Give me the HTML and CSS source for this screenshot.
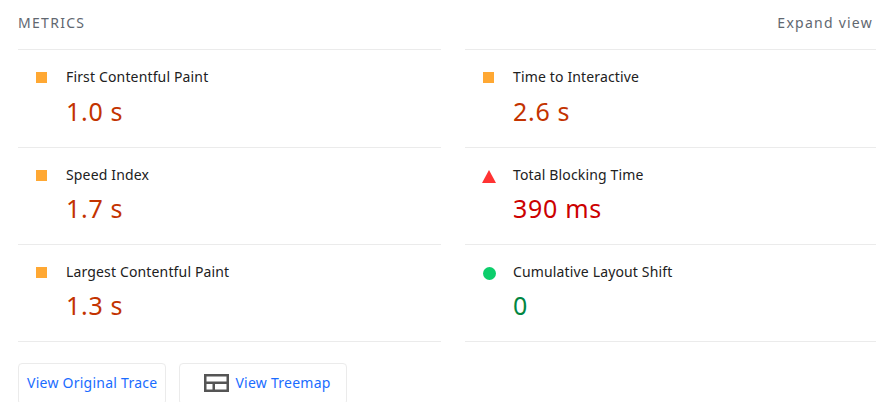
FILE: index.html
```html
<!DOCTYPE html>
<html lang="en">
<head>
    <meta charset="UTF-8">
    <title>Metrics</title>
    <link rel="stylesheet" href="styles.css">
</head>
<body>
    <div class="metrics">
        <div class="metrics-header">
            <span class="metrics-title">METRICS</span>
            <span class="expand-link">Expand view</span>
        </div>
        <div class="metrics-grid">
            <div class="metric">
                <span class="icon icon-square"></span>
                <div class="metric-text">
                    <div class="metric-name">First Contentful Paint</div>
                    <div class="metric-value average">1.0 s</div>
                </div>
            </div>
            <div class="metric">
                <span class="icon icon-square"></span>
                <div class="metric-text">
                    <div class="metric-name">Time to Interactive</div>
                    <div class="metric-value average">2.6 s</div>
                </div>
            </div>
            <div class="metric">
                <span class="icon icon-square"></span>
                <div class="metric-text">
                    <div class="metric-name">Speed Index</div>
                    <div class="metric-value average">1.7 s</div>
                </div>
            </div>
            <div class="metric">
                <span class="icon icon-triangle"></span>
                <div class="metric-text">
                    <div class="metric-name">Total Blocking Time</div>
                    <div class="metric-value fail">390 ms</div>
                </div>
            </div>
            <div class="metric">
                <span class="icon icon-square"></span>
                <div class="metric-text">
                    <div class="metric-name">Largest Contentful Paint</div>
                    <div class="metric-value average">1.3 s</div>
                </div>
            </div>
            <div class="metric">
                <span class="icon icon-circle"></span>
                <div class="metric-text">
                    <div class="metric-name">Cumulative Layout Shift</div>
                    <div class="metric-value pass">0</div>
                </div>
            </div>
        </div>
        <div class="buttons">
            <a class="button button-trace">View Original Trace</a>
            <a class="button button-treemap">
                <svg class="treemap-icon" width="25" height="18" viewBox="0 0 25 18">
                    <path fill="#555" fill-rule="evenodd" d="M0 0h25v18H0zM2.5 2.500v5h20v-5zM2.500 10v5.500h6V10zM11 10v5.500h11.500V10z"/>
                </svg>
                View Treemap
            </a>
        </div>
    </div>
</body>
</html>
```

FILE: styles.css
```css
html, body {
    height: 100%;
    overflow: hidden;
}

body {
    margin: 0;
    background: white;
    font-family: "Noto Sans", sans-serif;
    font-size: 14px;
}

.metrics {
    width: 870px;
    padding-left: 18px;
}

.metrics-header {
    display: flex;
    justify-content: space-between;
    align-items: center;
    width: 855px;
    height: 44px;
    padding-bottom: 5.4px;
    color: #616770;
}

.metrics-title {
    letter-spacing: 1.3px;
}

.expand-link {
    letter-spacing: 1.25px;
}

.metrics-grid {
    display: grid;
    grid-template-columns: 423px 423px;
    grid-auto-rows: 97.4px;
    column-gap: 24px;
}

.metric {
    display: flex;
    align-items: flex-start;
    box-sizing: border-box;
    padding-top: 17px;
    border-top: 1px solid #ebebeb;
}

.metrics-grid .metric:nth-last-child(-n+2) {
    border-bottom: 1px solid #ebebeb;
}

.icon {
    flex: none;
    width: 11px;
    height: 11px;
    margin: 5px 19px 0 18px;
}

.icon-square {
    background: #ffa833;
}

.icon-circle {
    background: #0cce6b;
    border-radius: 50%;
    width: 13px;
    height: 13px;
    margin-right: 17px;
}

.icon-triangle {
    width: 0;
    height: 0;
    margin-left: 17px;
    margin-right: 17px;
    border-left: 7px solid transparent;
    border-right: 7px solid transparent;
    border-bottom: 13px solid #ff3333;
}

.metric-name {
    color: #212121;
    line-height: 20px;
    letter-spacing: 0.15px;
}

.metric-value {
    margin-top: 7.2px;
    font-size: 25px;
    line-height: 32px;
    letter-spacing: 0.7px;
}

.average {
    color: #c33300;
}

.fail {
    color: #c00;
}

.pass {
    color: #018642;
}

.buttons {
    display: flex;
    gap: 13px;
    margin-top: 21px;
}

.button {
    display: flex;
    align-items: center;
    box-sizing: border-box;
    height: 42px;
    padding: 0 8px 2px;
    border: 1px solid #ebebeb;
    border-radius: 4px;
    color: #1a6cff;
    white-space: nowrap;
    letter-spacing: 0.25px;
}

.button-treemap {
    padding: 0 15px 2px 24px;
}

.treemap-icon {
    margin-right: 6px;
}
```
